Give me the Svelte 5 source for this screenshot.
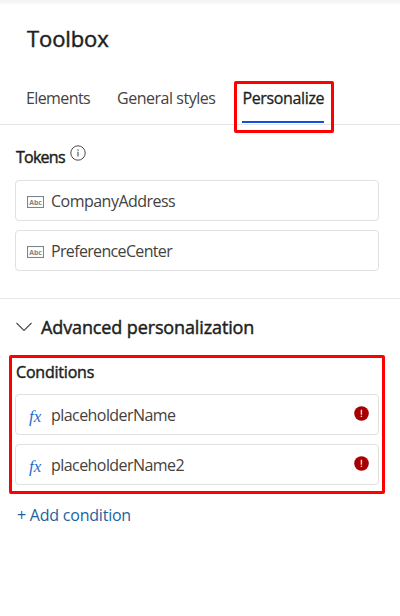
<script>
  const tabs = [
    { label: 'Elements', spacing: -0.6 },
    { label: 'General styles', spacing: -0.48 },
    { label: 'Personalize', spacing: -0.35, active: true }
  ];
  const tokens = [
    { name: 'CompanyAddress', spacing: -0.52 },
    { name: 'PreferenceCenter', spacing: -0.66 }
  ];
  const conditions = [
    { name: 'placeholderName', spacing: -0.56 },
    { name: 'placeholderName2', spacing: -0.56 }
  ];
</script>

<main class="panel">
  <h1>Toolbox</h1>
  <nav class="tabs">
    {#each tabs as tab}
      <span class="tab" class:active={tab.active} style:letter-spacing="{tab.spacing}px">{tab.label}</span>
    {/each}
  </nav>

  <section class="tokens">
    <div class="heading">
      <h2 class="tokens-title">Tokens</h2>
      <svg class="info" width="16" height="16" viewBox="0 0 16 16">
        <circle cx="8" cy="8" r="7.2" fill="none" stroke="#4c4a48" />
        <path d="M8 6.8V11.4" stroke="#4c4a48" stroke-width="1.1" />
        <circle cx="8" cy="4.9" r=".75" fill="#4c4a48" />
      </svg>
    </div>
    {#each tokens as token}
      <div class="card">
        <svg class="abc" width="17" height="12" viewBox="0 0 17 12">
          <rect x=".5" y=".5" width="16" height="11" fill="none" stroke="#7b8487" stroke-width="1.1" />
          <text x="8.5" y="8.7" text-anchor="middle" textLength="12.5" lengthAdjust="spacingAndGlyphs">Abc</text>
        </svg>
        <span class="name" style:letter-spacing="{token.spacing}px">{token.name}</span>
      </div>
    {/each}
  </section>

  <section class="advanced">
    <div class="expander">
      <svg width="16" height="10" viewBox="0 0 16 10">
        <path d="M.5 1L8 8.5L15.5 1" fill="none" stroke="#4c4a48" stroke-width="1.1" />
      </svg>
      <h3>Advanced personalization</h3>
    </div>
    <div class="conditions">
      <h2 class="cond-title">Conditions</h2>
      {#each conditions as condition}
        <div class="card">
          <span class="fx">fx</span>
          <span class="name" style:letter-spacing="{condition.spacing}px">{condition.name}</span>
          <svg class="error" width="15" height="15" viewBox="0 0 15 15">
            <circle cx="7.5" cy="7.5" r="7.3" fill="#a80000" />
            <path d="M7.4 3.8V8.7M7.4 9.8V11.1" stroke="#e9d5ee" stroke-width="1.4" />
          </svg>
        </div>
      {/each}
    </div>
    <div class="add">+ Add condition</div>
  </section>
</main>

<style>
  :global(body) { background: #fff; }
  .panel {
    box-sizing: border-box;
    width: 400px;
    height: 616px;
    overflow: hidden;
    background: linear-gradient(#f3f3f3 0, #f5f5f5 2px, #fff 5px);
    font-family: "Open Sans", "Noto Sans", sans-serif;
    font-size: 16px;
    color: #444240;
  }
  h1, h2, h3 {
    margin: 0;
    font-weight: 400;
    color: #201f1e;
    -webkit-text-stroke: 0.45px #201f1e;
  }
  h1 {
    padding: 22px 0 0 27px;
    height: 34px;
    font-size: 22px;
    line-height: 32px;
    letter-spacing: -0.1px;
  }
  .tabs {
    display: flex;
    height: 69px;
    padding-left: 26px;
    box-sizing: border-box;
    align-items: flex-end;
    border-bottom: 1px solid #e5e5e5;
  }
  .tab {
    height: 40px;
    box-sizing: border-box;
    line-height: 28px;
    margin-right: 27px;
    white-space: nowrap;
  }
  .active {
    position: relative;
    color: #201f1e;
    -webkit-text-stroke: 0.3px #201f1e;
    margin: 0;
  }
  .active::before {
    content: "";
    position: absolute;
    left: -8px;
    top: -3px;
    width: 94px;
    height: 46px;
    border: 3px solid #fe0000;
    border-radius: 2px;
  }
  .active::after {
    content: "";
    position: absolute;
    left: 0;
    top: 37px;
    width: 82px;
    height: 2px;
    background: #1150dd;
  }
  .tokens {
    box-sizing: border-box;
    height: 174px;
    padding: 18px 21px 0 15px;
    border-bottom: 1px solid #e6e6e6;
  }
  .heading { display: flex; height: 37px; gap: 4px; padding-left: 1px; }
  h2 { font-size: 16px; line-height: 28px; letter-spacing: -0.2px; }
  .tokens-title { width: 50px; letter-spacing: -0.75px; }
  .info { margin-top: 2px; }
  .card {
    box-sizing: border-box;
    display: flex;
    align-items: center;
    height: 41px;
    margin-bottom: 9px;
    padding: 0 9px 0 11px;
    background: #fff;
    border: 1px solid #e1e1e1;
    border-radius: 4px;
  }
  .abc { margin: 2px 7px 0 0; }
  .abc text { font: 700 7.5px "Open Sans", sans-serif; fill: #7b8487; }
  .name { line-height: 28px; white-space: nowrap; }
  .conditions .name { margin-top: 1px; }
  .fx {
    width: 24px;
    padding-top: 4px;
    padding-left: 2px;
    box-sizing: border-box;
    font: italic 17px "Liberation Serif", serif;
    color: #1a6fd4;
  }
  .error { margin: -3px 0 0 auto; }
  .expander {
    display: flex;
    align-items: center;
    height: 56px;
    padding-left: 16px;
    gap: 9px;
  }
  h3 { font-size: 18px; line-height: 28px; letter-spacing: -0.12px; white-space: nowrap; }
  .conditions {
    box-sizing: border-box;
    width: 376px;
    height: 139px;
    margin-left: 9px;
    padding: 0 3px;
    border: 3px solid #fe0000;
    border-radius: 2px;
  }
  .cond-title { height: 36px; padding-left: 1px; }
  .add {
    margin: 7px 0 0 17px;
    line-height: 28px;
    color: #1b639f;
    letter-spacing: -0.22px;
    white-space: nowrap;
  }
</style>
